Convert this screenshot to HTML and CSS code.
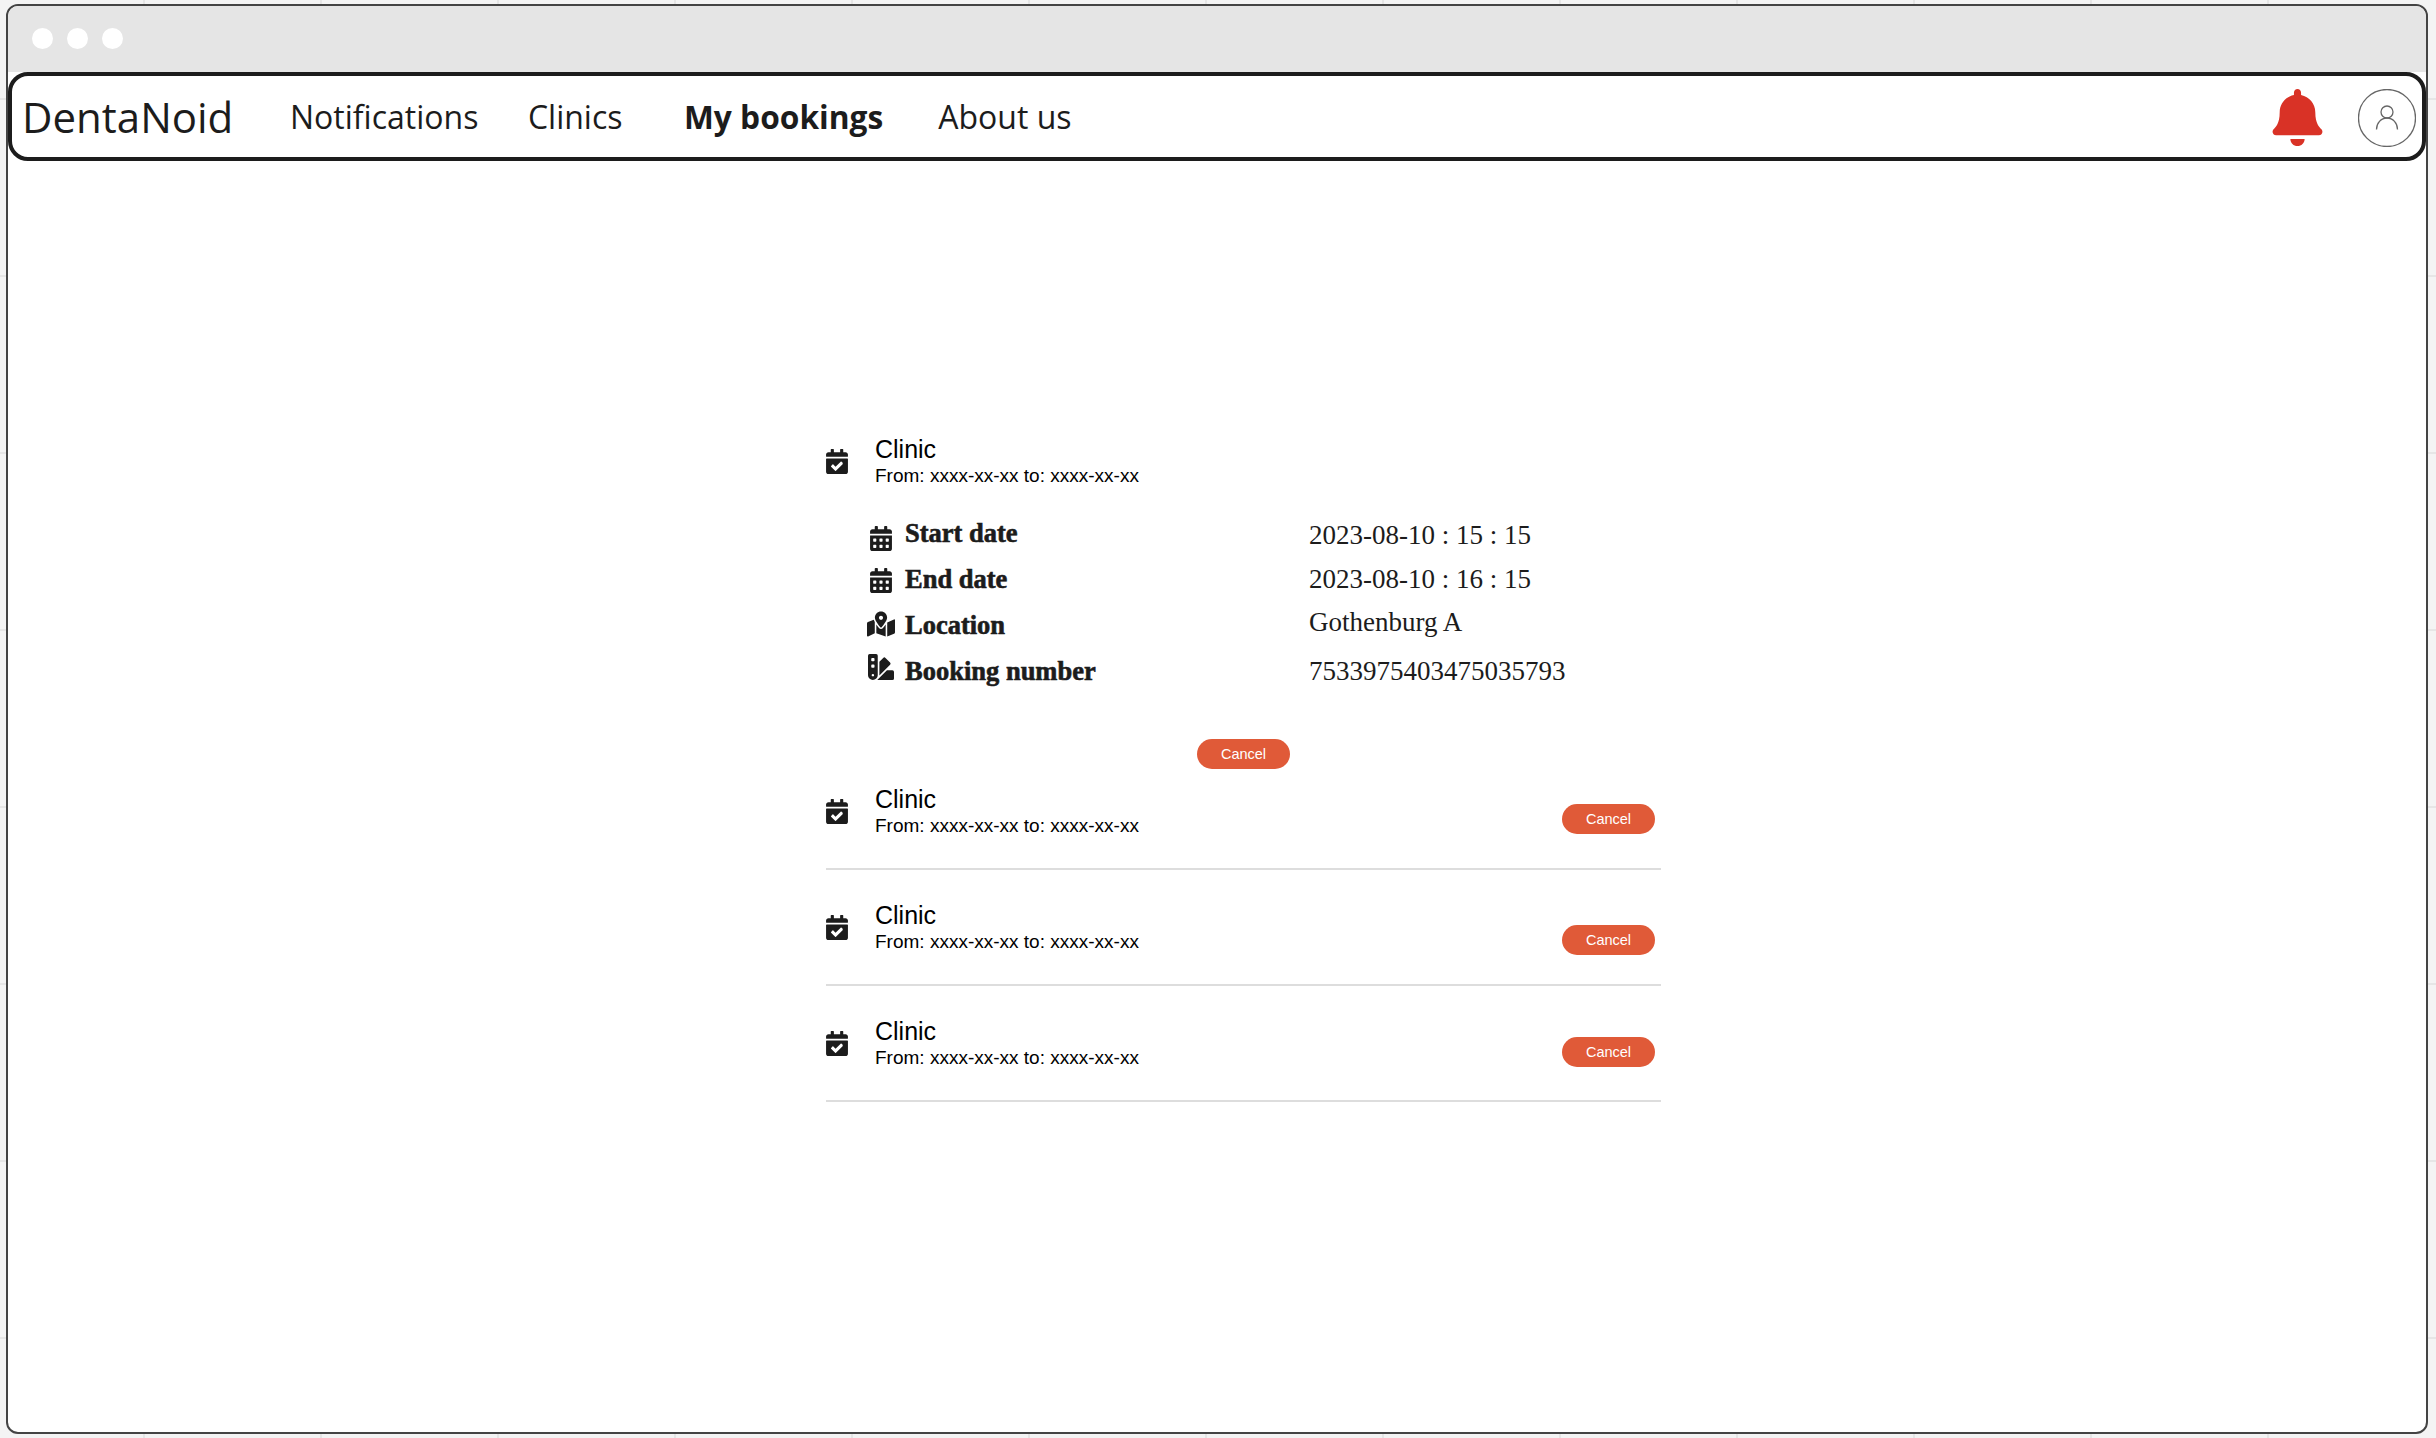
FILE: index.html
```html
<!DOCTYPE html>
<html lang="en">
<head>
  <meta charset="UTF-8">
  <meta name="viewport" content="width=device-width, initial-scale=1.0">
  <title>DentaNoid - My bookings</title>
  <link rel="stylesheet" href="styles.css">
</head>
<body>
  <div class="window">
    <div class="titlebar">
      <span class="dot"></span>
      <span class="dot"></span>
      <span class="dot"></span>
    </div>

    <nav class="navbar">
      <a class="logo">DentaNoid</a>
      <a class="nav-link">Notifications</a>
      <a class="nav-link">Clinics</a>
      <a class="nav-link nav-active">My bookings</a>
      <a class="nav-link">About us</a>
      <svg class="bell" viewBox="0 0 448 512"><path d="M224 512c35.32 0 63.97-28.65 63.97-64H160.03c0 35.35 28.65 64 63.97 64zm215.39-149.71c-19.32-20.76-55.47-51.99-55.47-154.29 0-77.7-54.48-139.9-127.94-155.16V32c0-17.67-14.32-32-31.98-32s-31.98 14.33-31.98 32v20.84C118.56 68.1 64.08 130.3 64.08 208c0 102.3-36.15 133.53-55.47 154.29-6 6.45-8.66 14.16-8.61 21.71.11 16.4 12.98 32 32.1 32h383.8c19.12 0 32-15.6 32.1-32 .05-7.55-2.61-15.27-8.61-21.71z"/></svg>
      <svg class="avatar" viewBox="0 0 58 58">
        <circle cx="29" cy="29" r="28.5"/>
        <circle cx="29" cy="23" r="6"/>
        <path d="M18.5 40.5c0-6.5 4.5-11.5 10.5-11.5s10.5 5 10.5 11.5"/>
      </svg>
    </nav>

    <main class="bookings">
      <section class="booking-open">
        <div class="booking-head">
          <svg class="cal-icon" viewBox="0 0 448 512"><use href="#calendar-check"/></svg>
          <div>
            <div class="clinic">Clinic</div>
            <div class="range">From: xxxx-xx-xx to: xxxx-xx-xx</div>
          </div>
        </div>

        <div class="details">
          <div class="labels">
            <div class="label">
              <svg class="label-icon icon-start" viewBox="0 0 448 512"><use href="#calendar-alt"/></svg>
              Start date
            </div>
            <div class="label">
              <svg class="label-icon icon-end" viewBox="0 0 448 512"><use href="#calendar-alt"/></svg>
              End date
            </div>
            <div class="label">
              <svg class="label-icon icon-location" viewBox="0 0 576 512"><path d="M288 0c-69.59 0-126 56.41-126 126 0 56.26 82.35 158.8 113.9 196.02 6.39 7.54 17.82 7.54 24.2 0C331.65 284.8 414 182.26 414 126 414 56.41 357.59 0 288 0zm0 168c-23.2 0-42-18.8-42-42s18.8-42 42-42 42 18.8 42 42-18.8 42-42 42zM20.12 215.95A32.006 32.006 0 0 0 0 245.66v250.32c0 11.32 11.43 19.06 21.94 14.86L160 448V214.92c-8.84-15.98-16.07-31.54-21.25-46.42L20.12 215.95zM288 359.67c-14.07 0-27.38-6.18-36.51-16.96-19.66-23.2-40.57-49.62-59.49-76.72V448l192 64V266c-18.92 27.09-39.82 53.52-59.49 76.72-9.13 10.77-22.44 16.95-36.51 16.95zm266.06-198.51L416 224v288l139.88-55.95A31.996 31.996 0 0 0 576 426.34V176.02c0-11.32-11.43-19.06-21.94-14.86z"/></svg>
              Location
            </div>
            <div class="label">
              <svg class="label-icon icon-number" viewBox="0 0 512 512"><path d="M434.66 167.71 344.5 77.36a31.83 31.83 0 0 0-45-.07l-.07.07L224 152.88V424l210.66-211.1a32 32 0 0 0 0-45.19zM480 320H373.09L186.68 506.51c-2.06 2.07-4.5 3.58-6.68 5.49h300a32 32 0 0 0 32-32V352a32 32 0 0 0-32-32zM192 32a32 32 0 0 0-32-32H32A32 32 0 0 0 0 32v384a96 96 0 0 0 192 0zM96 440a24 24 0 1 1 24-24 24 24 0 0 1-24 24zm32-184a16 16 0 0 1-16 16H80a16 16 0 0 1-16-16v-32a16 16 0 0 1 16-16h32a16 16 0 0 1 16 16zm0-128a16 16 0 0 1-16 16H80a16 16 0 0 1-16-16V96a16 16 0 0 1 16-16h32a16 16 0 0 1 16 16z"/></svg>
              Booking number
            </div>
          </div>
          <div class="values">
            <div class="value">2023-08-10 : 15 : 15</div>
            <div class="value">2023-08-10 : 16 : 15</div>
            <div class="value">Gothenburg A</div>
            <div class="value value-number">7533975403475035793</div>
          </div>
        </div>

        <button class="cancel cancel-center">Cancel</button>
      </section>

      <div class="booking-row row-first">
        <svg class="cal-icon" viewBox="0 0 448 512"><use href="#calendar-check"/></svg>
        <div>
          <div class="clinic">Clinic</div>
          <div class="range">From: xxxx-xx-xx to: xxxx-xx-xx</div>
        </div>
        <button class="cancel cancel-one">Cancel</button>
      </div>
      <div class="booking-row">
        <svg class="cal-icon" viewBox="0 0 448 512"><use href="#calendar-check"/></svg>
        <div>
          <div class="clinic">Clinic</div>
          <div class="range">From: xxxx-xx-xx to: xxxx-xx-xx</div>
        </div>
        <button class="cancel cancel-two">Cancel</button>
      </div>
      <div class="booking-row">
        <svg class="cal-icon" viewBox="0 0 448 512"><use href="#calendar-check"/></svg>
        <div>
          <div class="clinic">Clinic</div>
          <div class="range">From: xxxx-xx-xx to: xxxx-xx-xx</div>
        </div>
        <button class="cancel cancel-three">Cancel</button>
      </div>
    </main>
  </div>

  <svg class="icon-defs">
    <symbol id="calendar-check" viewBox="0 0 448 512"><path d="M436 160H12c-6.6 0-12-5.4-12-12v-36c0-26.5 21.5-48 48-48h48V12c0-6.6 5.4-12 12-12h40c6.6 0 12 5.4 12 12v52h128V12c0-6.6 5.4-12 12-12h40c6.6 0 12 5.4 12 12v52h48c26.5 0 48 21.5 48 48v36c0 6.6-5.4 12-12 12zM12 192h424c6.6 0 12 5.4 12 12v260c0 26.5-21.5 48-48 48H48c-26.5 0-48-21.5-48-48V204c0-6.6 5.4-12 12-12zm333.3 95.9l-28.2-28.4c-4.7-4.7-12.3-4.8-17-.1L194.6 364.2l-45.9-46.3c-4.7-4.7-12.3-4.8-17-.1l-28.4 28.2c-4.7 4.7-4.8 12.3-.1 17l82.6 83.3c4.7 4.7 12.3 4.8 17 .1l135.6-134.5c4.7-4.7 4.7-12.3 0-17z"/></symbol>
    <symbol id="calendar-alt" viewBox="0 0 448 512"><path d="M0 464c0 26.5 21.5 48 48 48h352c26.5 0 48-21.5 48-48V192H0v272zm320-196c0-6.6 5.4-12 12-12h40c6.6 0 12 5.4 12 12v40c0 6.6-5.4 12-12 12h-40c-6.6 0-12-5.4-12-12v-40zm0 128c0-6.6 5.4-12 12-12h40c6.6 0 12 5.4 12 12v40c0 6.6-5.4 12-12 12h-40c-6.6 0-12-5.4-12-12v-40zM192 268c0-6.6 5.4-12 12-12h40c6.6 0 12 5.4 12 12v40c0 6.6-5.4 12-12 12h-40c-6.6 0-12-5.4-12-12v-40zm0 128c0-6.6 5.4-12 12-12h40c6.6 0 12 5.4 12 12v40c0 6.6-5.4 12-12 12h-40c-6.6 0-12-5.4-12-12v-40zM64 268c0-6.6 5.4-12 12-12h40c6.6 0 12 5.4 12 12v40c0 6.6-5.4 12-12 12H76c-6.6 0-12-5.4-12-12v-40zm0 128c0-6.6 5.4-12 12-12h40c6.6 0 12 5.4 12 12v40c0 6.6-5.4 12-12 12H76c-6.6 0-12-5.4-12-12v-40zM400 64h-48V16c0-8.8-7.2-16-16-16h-32c-8.8 0-16 7.2-16 16v48H160V16c0-8.8-7.2-16-16-16h-32c-8.8 0-16 7.2-16 16v48H48C21.5 64 0 85.5 0 112v48h448v-48c0-26.5-21.5-48-48-48z"/></symbol>
  </svg>
</body>
</html>
```

FILE: styles.css
```css
* {
  box-sizing: border-box;
}
html, body {
  height: 100%;
}
body {
  margin: 0;
  padding: 4px 8px 4px 6px;
  overflow: hidden;
  font-family: "Liberation Sans", Arial, sans-serif;
  background-color: #f4f4f4;
  background-image:
    linear-gradient(to right, #e6e6e6 2px, transparent 2px),
    linear-gradient(to bottom, #e6e6e6 2px, transparent 2px);
  background-size: 177px 177px;
  background-position: 143px 98px;
  color: #000;
}
.icon-defs {
  display: none;
}

.window {
  height: 100%;
  background: #fff;
  border: 2px solid #444;
  border-radius: 12px;
}
.titlebar {
  display: flex;
  align-items: center;
  gap: 14px;
  height: 66px;
  padding: 0 0 1px 24px;
  background: #e5e5e5;
  border-radius: 10px 10px 0 0;
}
.dot {
  width: 21px;
  height: 21px;
  border-radius: 50%;
  background: #fff;
}

.navbar {
  display: flex;
  align-items: center;
  height: 89px;
  padding: 0 6px 0 10px;
  background: #fff;
  border: 4px solid #1c1c1c;
  border-radius: 20px;
  font-family: "Open Sans", sans-serif;
  color: #1c1c1c;
}
.logo {
  width: 268px;
  font-size: 42px;
}
.nav-link {
  margin-right: 49.5px;
  font-size: 32px;
}
.nav-active {
  margin-left: 12px;
  margin-right: 55px;
  font-size: 31.7px;
  font-weight: 700;
}
.bell {
  width: 51px;
  height: 57px;
  margin-top: 2px;
  margin-left: auto;
  margin-right: 35px;
  fill: #d93226;
}
.avatar {
  width: 58px;
  height: 58px;
  margin-top: 2px;
  fill: none;
  stroke: #666;
  stroke-width: 1.3;
}

.bookings {
  width: 835px;
  margin-left: 818px;
  padding-top: 274px;
}
.booking-open {
  display: flex;
  flex-direction: column;
}
.booking-head {
  display: flex;
}
.cal-icon {
  flex: none;
  width: 22px;
  height: 25px;
  margin-top: 14px;
  margin-right: 27px;
  fill: #1c1c1c;
}
.clinic {
  font-size: 25px;
  line-height: 28px;
}
.range {
  font-size: 19px;
  line-height: 26px;
}

.details {
  display: flex;
  margin-left: 41px;
}
.labels {
  width: 442px;
  margin-top: 20.5px;
}
.label {
  display: flex;
  align-items: flex-start;
  height: 46.3px;
  font-family: "Liberation Serif", serif;
  font-size: 26.5px;
  font-weight: 700;
  line-height: 46px;
  color: #1c1c1c;
  -webkit-text-stroke: 0.6px #1c1c1c;
}
.label-icon {
  flex: none;
  width: 28px;
  height: 25px;
  margin-right: 10px;
  fill: #1c1c1c;
  -webkit-text-stroke: 0;
}
.icon-start { margin-top: 16px; }
.icon-end { margin-top: 12px; }
.icon-location { margin-top: 9px; height: 26px; }
.icon-number { margin-top: 6px; height: 26px; }

.values {
  margin-top: 25px;
}
.value {
  font-family: "Liberation Serif", serif;
  font-size: 27px;
  line-height: 43.5px;
  color: #1c1c1c;
}
.value-number {
  margin-top: 5px;
}

.cancel {
  flex: none;
  width: 93px;
  height: 30px;
  padding: 0;
  background: #e05a38;
  border: none;
  border-radius: 15px;
  font-family: "Liberation Sans", Arial, sans-serif;
  font-size: 14.5px;
  color: #fff;
}
.cancel-center {
  align-self: center;
  margin-top: 44px;
}

.booking-row {
  display: flex;
  align-items: flex-start;
  height: 116px;
  padding-top: 31px;
  border-bottom: 2px solid #ddd;
}
.row-first {
  height: 101px;
  padding-top: 16px;
}
.booking-row .cancel {
  margin-left: auto;
  margin-right: 6px;
}
.booking-row .cancel-one { margin-top: 19px; }
.booking-row .cancel-two { margin-top: 24px; }
.booking-row .cancel-three { margin-top: 20px; }
```
